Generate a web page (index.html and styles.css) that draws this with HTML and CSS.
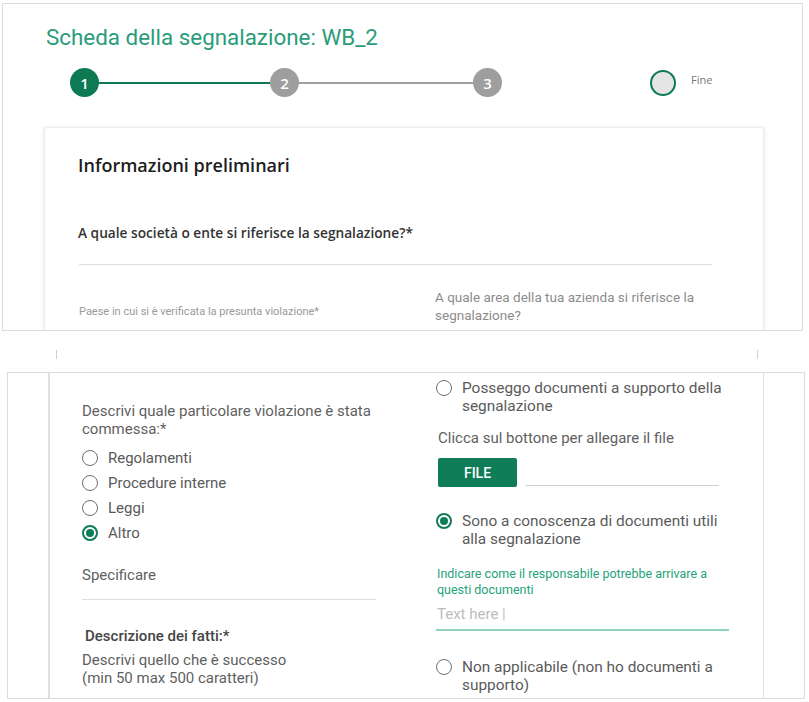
FILE: index.html
```html
<!DOCTYPE html>
<html lang="it">
<head>
    <meta charset="UTF-8">
    <title>Scheda della segnalazione: WB_2</title>
    <link rel="stylesheet" href="styles.css">
</head>
<body>
<div class="shot shot-top">
    <h1 class="title">Scheda della segnalazione: WB_2</h1>
    <div class="stepper">
        <span class="step step-done">1</span>
        <span class="bar bar-done"></span>
        <span class="step">2</span>
        <span class="bar bar-next"></span>
        <span class="step">3</span>
        <span class="fine-dot"></span>
        <span class="fine-label">Fine</span>
    </div>
    <div class="card card-top">
        <h2>Informazioni preliminari</h2>
        <div class="question">A quale società o ente si riferisce la segnalazione?*</div>
        <div class="field-line"></div>
        <div class="pair">
            <div class="small-label">Paese in cui si è verificata la presunta violazione*</div>
            <div class="soft-label">A quale area della tua azienda si riferisce la segnalazione?</div>
        </div>
    </div>
</div>

<div class="ticks"><span class="tick tick-left"></span><span class="tick tick-right"></span></div>

<div class="shot shot-bottom">
    <div class="card card-bottom">
        <div class="col col-left">
            <div class="text">Descrivi quale particolare violazione è stata commessa:*</div>
            <div class="opt-list">
                <div class="opt"><span class="radio"></span>Regolamenti</div>
                <div class="opt"><span class="radio"></span>Procedure interne</div>
                <div class="opt"><span class="radio"></span>Leggi</div>
                <div class="opt"><span class="radio radio-on"></span>Altro</div>
            </div>
            <div class="text specify">Specificare</div>
            <div class="field-line short"></div>
            <div class="subhead">Descrizione dei fatti:*</div>
            <div class="text describe">Descrivi quello che è successo<br>(min 50 max 500 caratteri)</div>
        </div>
        <div class="col col-right">
            <div class="opt opt-wrap"><span class="radio"></span><span>Posseggo documenti a supporto della segnalazione</span></div>
            <div class="text hint">Clicca sul bottone per allegare il file</div>
            <div class="upload">
                <button type="button" class="file-btn">FILE</button>
                <span class="upload-line"></span>
            </div>
            <div class="opt opt-wrap known"><span class="radio radio-on"></span><span>Sono a conoscenza di documenti utili alla segnalazione</span></div>
            <div class="green-label">Indicare come il responsabile potrebbe arrivare a questi documenti</div>
            <div class="placeholder">Text here |</div>
            <div class="active-line"></div>
            <div class="opt opt-wrap none"><span class="radio"></span><span>Non applicabile (non ho documenti a supporto)</span></div>
        </div>
    </div>
</div>
</body>
</html>
```

FILE: styles.css
```css
body {
    margin: 0;
    background: #fff;
    font-family: Roboto, "Liberation Sans", sans-serif;
    color: #5f5f5f;
}
.shot {
    box-sizing: border-box;
    border: 1px solid #dcdcdc;
    overflow: hidden;
    background: #fff;
}
.shot-top {
    margin: 3px 0 0 2px;
    width: 801px;
    height: 328px;
}
.title {
    margin: 20px 0 0 43px;
    font-size: 22.4px;
    line-height: 26px;
    font-weight: 400;
    color: #2a9c7a;
}
.stepper {
    display: flex;
    align-items: center;
    margin: 18px 0 0 67px;
    height: 29px;
}
.step {
    box-sizing: border-box;
    width: 29px;
    height: 29px;
    border-radius: 50%;
    background: #9e9e9e;
    color: #fff;
    font-family: "Open Sans", sans-serif;
    font-size: 15px;
    font-weight: 600;
    display: flex;
    align-items: center;
    justify-content: center;
}
.step-done {
    background: #0d7a53;
}
.bar {
    height: 2px;
    background: #9e9e9e;
}
.bar-done {
    width: 171px;
    background: #0d7a53;
}
.bar-next {
    width: 174px;
}
.fine-dot {
    box-sizing: border-box;
    width: 26px;
    height: 26px;
    margin-left: 148px;
    border-radius: 50%;
    border: 2px solid #0d7a53;
    background: #e4e4e4;
}
.fine-label {
    margin: 0 0 6px 15px;
    font-family: "Open Sans", sans-serif;
    font-size: 11px;
    color: #777;
}
.card {
    background: #fff;
    box-sizing: border-box;
}
.card-top {
    margin: 30px 0 0 41px;
    width: 720px;
    height: 260px;
    padding: 26px 0 0 33px;
    border: 1px solid #ececec;
    border-radius: 3px;
    box-shadow: 0 1px 4px rgba(0,0,0,0.12);
}
.card-top h2 {
    margin: 0;
    font-family: "Open Sans", sans-serif;
    font-size: 18px;
    line-height: 23px;
    font-weight: 600;
    color: #1d1d1d;
}
.question {
    margin-top: 46px;
    font-family: "Open Sans", sans-serif;
    font-size: 13.7px;
    line-height: 20px;
    font-weight: 600;
    color: #333;
}
.field-line {
    height: 1px;
    background: #dedede;
}
.card-top .field-line {
    margin: 21px 0 0 1px;
    width: 633px;
}
.pair {
    display: grid;
    grid-template-columns: 357px 290px;
    align-items: end;
    margin-top: 23px;
}
.small-label {
    font-size: 11px;
    line-height: 18px;
    color: #999;
    margin: 0 0 3px 1px;
}
.soft-label {
    font-size: 13.5px;
    line-height: 18px;
    color: #8c8c8c;
}
.ticks {
    display: flex;
    height: 41px;
    padding-top: 19px;
    box-sizing: border-box;
}
.tick {
    width: 1px;
    height: 9px;
    background: #cfcfcf;
}
.tick-left {
    margin-left: 56px;
}
.tick-right {
    margin-left: 700px;
}
.shot-bottom {
    margin-left: 7px;
    width: 798px;
    height: 327px;
}
.card-bottom {
    display: grid;
    grid-template-columns: 300px 300px;
    column-gap: 54px;
    margin-left: 40px;
    width: 716px;
    height: 100%;
    padding-left: 32px;
    border-left: 2px solid #e0e0e0;
    border-right: 1px solid #e0e0e0;
}
.text {
    font-size: 15px;
    line-height: 18px;
}
.col-left {
    padding-top: 29px;
}
.col-right {
    padding-top: 6px;
}
.opt-list {
    margin-top: 7px;
}
.opt {
    display: flex;
    align-items: center;
    gap: 10px;
    height: 25px;
    font-size: 15px;
    color: #5a5a5a;
}
.col-right .opt {
    font-size: 15.4px;
}
.opt-wrap {
    align-items: flex-start;
    height: auto;
    line-height: 18px;
}
.opt-wrap .radio {
    margin-top: 1px;
}
.radio {
    box-sizing: border-box;
    flex: none;
    width: 16px;
    height: 16px;
    border-radius: 50%;
    border: 1.5px solid #6f6f6f;
    display: flex;
    align-items: center;
    justify-content: center;
}
.radio-on {
    border: 2px solid #0f7d58;
}
.radio-on::after {
    content: "";
    width: 8px;
    height: 8px;
    border-radius: 50%;
    background: #0f7d58;
}
.specify {
    margin-top: 21px;
}
.field-line.short {
    margin-top: 15px;
    width: 294px;
}
.subhead {
    margin-top: 27px;
    padding-left: 3px;
    font-size: 15px;
    line-height: 18px;
    font-weight: 500;
    color: #454545;
}
.describe {
    margin-top: 6px;
}
.hint {
    margin-top: 14px;
    padding-left: 2px;
}
.upload {
    display: flex;
    align-items: flex-end;
    gap: 9px;
    margin: 11px 0 0 2px;
}
.file-btn {
    width: 79px;
    height: 29px;
    border: none;
    border-radius: 2px;
    background: #0f7d58;
    color: #fff;
    font-family: Roboto, sans-serif;
    font-size: 14px;
    font-weight: 500;
    cursor: pointer;
}
.upload-line {
    width: 193px;
    height: 1px;
    margin-bottom: 1px;
    background: #cfcfcf;
}
.known {
    margin-top: 25px;
}
.green-label {
    margin-top: 18px;
    padding-left: 1px;
    width: 285px;
    font-size: 12.5px;
    line-height: 16px;
    color: #25a27b;
}
.placeholder {
    margin-top: 7px;
    padding-left: 1px;
    font-size: 15px;
    line-height: 18px;
    color: #bdbdbd;
}
.active-line {
    margin-top: 6px;
    width: 293px;
    height: 2px;
    background: #8fd2ba;
}
.none {
    margin-top: 27px;
}
```
